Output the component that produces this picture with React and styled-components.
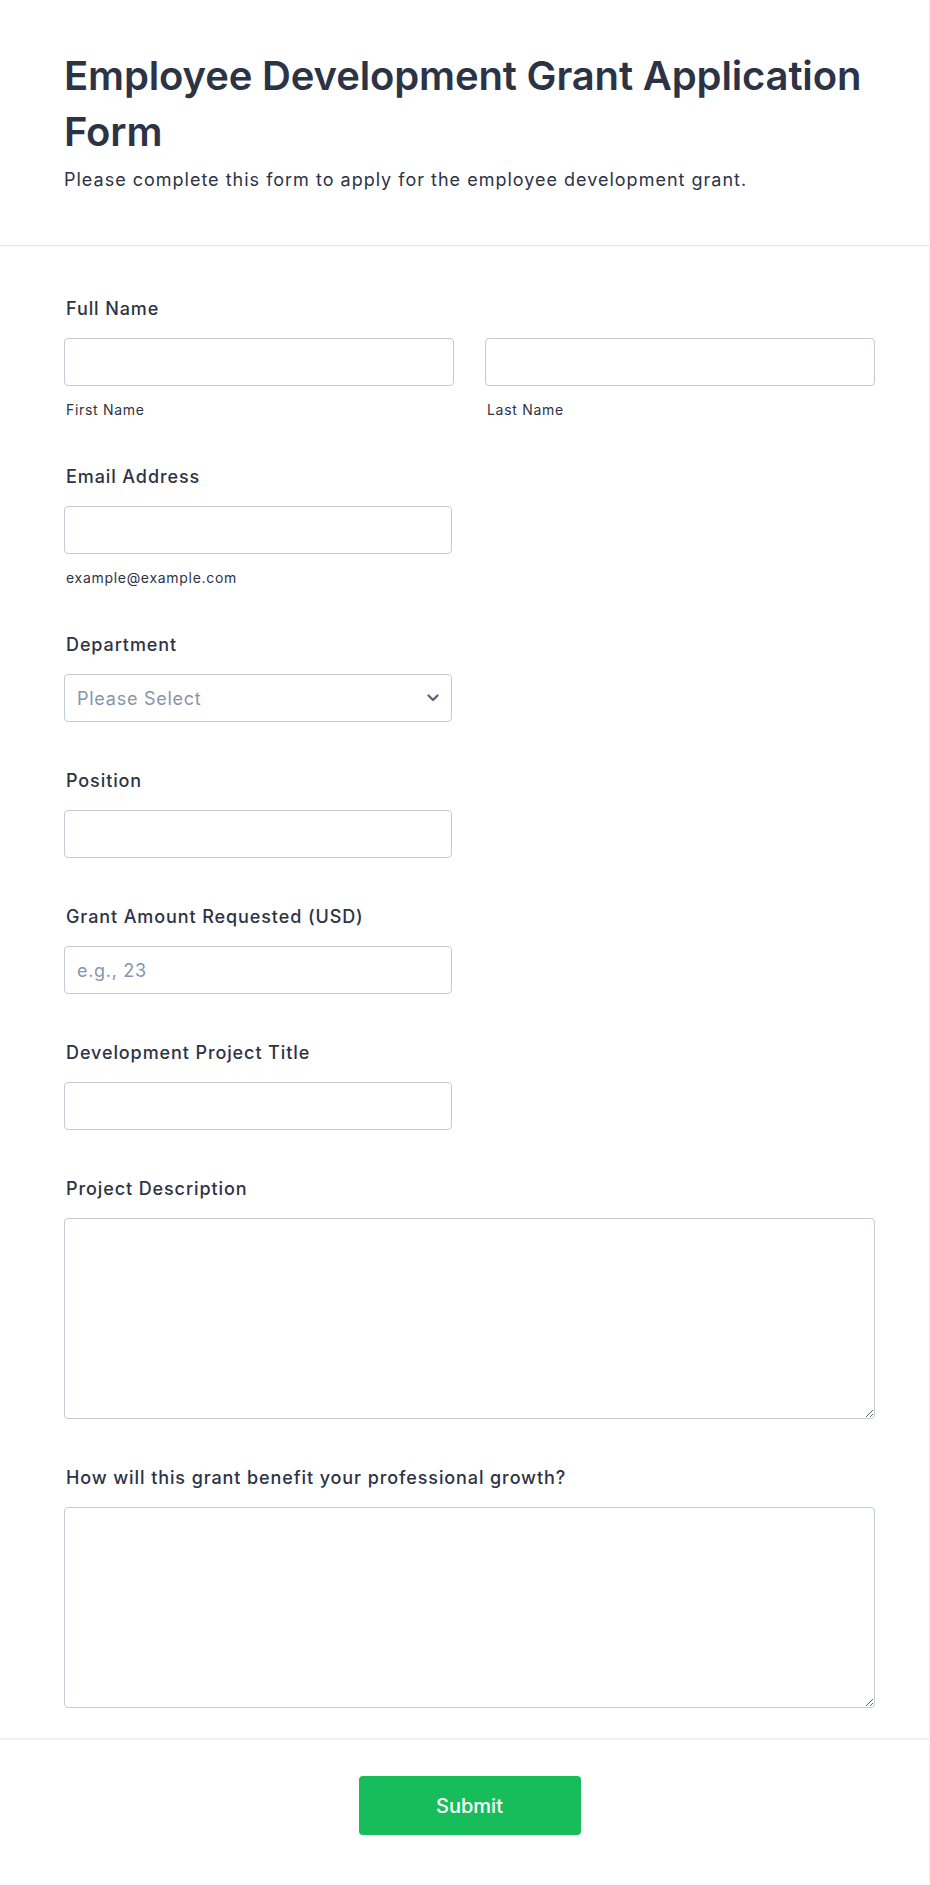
import React from "react";
import styled, { createGlobalStyle } from "styled-components";

const Global = createGlobalStyle`
  * { box-sizing: border-box; }
  html, body { margin: 0; padding: 0; background: #ffffff; }
  body { font-family: Inter, "Noto Sans", sans-serif; color: #2c3345; }
`;

const Page = styled.div`
  width: 930px;
  background: #ffffff;
  border-right: 1px solid #f3f4f6;
  display: flex;
  flex-direction: column;
`;

const Header = styled.header`
  padding: 48px 55px 52px 64px;
  border-bottom: 1px solid #dfe3ea;
`;

const Title = styled.h1`
  margin: 0;
  font-size: 40px;
  line-height: 56px;
  font-weight: 600;
  color: #2c3345;
  letter-spacing: -0.15px;
`;

const Subtitle = styled.p`
  margin: 6px 0 0;
  font-size: 18px;
  line-height: 27px;
  font-weight: 400;
  color: #2c3345;
  letter-spacing: 1px;
`;

const Fields = styled.form`
  display: flex;
  flex-direction: column;
  gap: 45px;
  padding: 49px 54px 30px 64px;
`;

const Field = styled.div`
  display: flex;
  flex-direction: column;
`;

const Label = styled.label`
  font-size: 18px;
  line-height: 27px;
  font-weight: 500;
  color: #2c3345;
  padding-left: 2px;
  margin-bottom: 16px;
  letter-spacing: 0.9px;
`;

const Row = styled.div`
  display: grid;
  grid-template-columns: 1fr 1fr;
  gap: 31px;
`;

const Col = styled.div`
  display: flex;
  flex-direction: column;
`;

const Input = styled.input`
  width: ${(p) => (p.$full ? "100%" : "388px")};
  height: 48px;
  border: 1px solid #c3cad8;
  border-radius: 4px;
  padding: 0 12px;
  font-family: Inter, sans-serif;
  font-size: 18px;
  letter-spacing: 0.7px;
  color: #2c3345;
  background: #fff;
  outline: none;
  &::placeholder { color: #8894ab; }
`;

const SubLabel = styled.span`
  margin-top: 15px;
  font-size: 14px;
  line-height: 17px;
  color: #2c3345;
  padding-left: 2px;
  letter-spacing: 0.7px;
`;

const SelectWrap = styled.div`
  position: relative;
  width: 388px;
  height: 48px;
`;

const Select = styled.select`
  width: 100%;
  height: 48px;
  appearance: none;
  -webkit-appearance: none;
  border: 1px solid #c3cad8;
  border-radius: 4px;
  padding: 0 40px 0 12px;
  font-family: Inter, sans-serif;
  font-size: 18px;
  letter-spacing: 0.75px;
  color: #8894ab;
  background: #fff;
  outline: none;
`;

const Chevron = styled.svg`
  position: absolute;
  right: 13px;
  top: 50%;
  transform: translateY(-50%);
  pointer-events: none;
`;

const TextArea = styled.textarea`
  width: 100%;
  height: 201px;
  border: 1px solid #c3cad8;
  border-radius: 4px;
  padding: 10px 12px;
  font-family: Inter, sans-serif;
  font-size: 18px;
  color: #2c3345;
  background: #fff;
  outline: none;
  resize: vertical;
  display: block;
`;

const Footer = styled.footer`
  border-top: 2px solid #eef0f4;
  padding: 36px 54px 46px 64px;
  display: flex;
  justify-content: center;
`;

const SubmitButton = styled.button`
  width: 222px;
  height: 59px;
  border: none;
  border-radius: 4px;
  background: #18bd5b;
  color: #ffffff;
  font-family: Inter, sans-serif;
  font-size: 20px;
  font-weight: 500;
  cursor: pointer;
`;

export default function App() {
  return (
    <Page>
      <Global />
      <Header>
        <Title>Employee Development Grant Application Form</Title>
        <Subtitle>Please complete this form to apply for the employee development grant.</Subtitle>
      </Header>
      <Fields onSubmit={(e) => e.preventDefault()}>
        <Field>
          <Label>Full Name</Label>
          <Row>
            <Col>
              <Input $full type="text" />
              <SubLabel>First Name</SubLabel>
            </Col>
            <Col>
              <Input $full type="text" />
              <SubLabel>Last Name</SubLabel>
            </Col>
          </Row>
        </Field>
        <Field>
          <Label>Email Address</Label>
          <Input type="email" />
          <SubLabel>example@example.com</SubLabel>
        </Field>
        <Field>
          <Label>Department</Label>
          <SelectWrap>
            <Select defaultValue="">
              <option value="">Please Select</option>
              <option>Engineering</option>
              <option>Marketing</option>
              <option>Sales</option>
              <option>Human Resources</option>
            </Select>
            <Chevron width="12" height="8" viewBox="0 0 12 8" fill="none">
              <polyline points="1.5,1.5 6,6 10.5,1.5" stroke="#56657c" strokeWidth="2.3" strokeLinecap="round" strokeLinejoin="round" />
            </Chevron>
          </SelectWrap>
        </Field>
        <Field>
          <Label>Position</Label>
          <Input type="text" />
        </Field>
        <Field>
          <Label>Grant Amount Requested (USD)</Label>
          <Input type="number" placeholder="e.g., 23" />
        </Field>
        <Field>
          <Label>Development Project Title</Label>
          <Input type="text" />
        </Field>
        <Field>
          <Label>Project Description</Label>
          <TextArea />
        </Field>
        <Field>
          <Label>How will this grant benefit your professional growth?</Label>
          <TextArea />
        </Field>
      </Fields>
      <Footer>
        <SubmitButton type="submit">Submit</SubmitButton>
      </Footer>
    </Page>
  );
}
